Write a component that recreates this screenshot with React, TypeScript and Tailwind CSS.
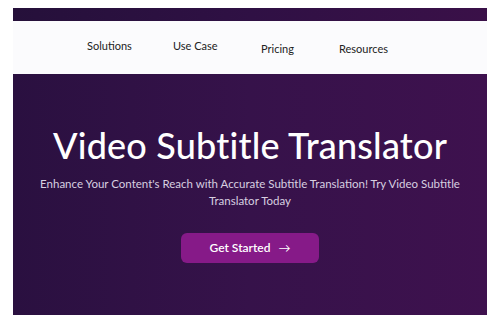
import React from "react";

const navItems = [
  { label: "Solutions", offset: "mt-0", width: "w-[86px]" },
  { label: "Use Case", offset: "mt-0", width: "w-[88px]" },
  { label: "Pricing", offset: "mt-[3px]", width: "w-[78px]" },
  { label: "Resources", offset: "mt-[3px]", width: "" },
];

export default function App() {
  return (
    <div
      className="w-[500px] h-[323px] bg-white pt-2 px-[13px]"
      style={{ fontFamily: "Lato, 'Noto Sans', sans-serif" }}
    >
      {/* top strip */}
      <div className="h-[13px] bg-gradient-to-r from-[#25103a] via-[#2f1044] to-[#3a1048]" />

      {/* Nav */}
      <nav className="h-[53px] bg-[#fbfbfd] flex items-start pt-[17px] pl-[74px]">
        {navItems.map((item) => (
          <span key={item.label} className={`text-[11px] text-[#222] ${item.offset} ${item.width}`}>
            {item.label}
          </span>
        ))}
      </nav>

      {/* Hero */}
      <section className="h-[241px] bg-gradient-to-r from-[#2a1040] via-[#36124a] to-[#3e114e] flex flex-col items-center text-center pt-[49px]">
        <h1 className="text-[36px] leading-[45px] font-medium text-white tracking-[0.2px]">
          Video Subtitle Translator
        </h1>
        <p className="mt-[7px] text-[11.5px] leading-[17px] text-[#d8cfe0] w-[420px]">
          Enhance Your Content's Reach with Accurate Subtitle Translation! Try Video Subtitle
          Translator Today
        </p>
        <button className="mt-[24px] w-[138px] h-[30px] rounded-[6px] bg-[#861a88] text-white text-[12px] font-semibold flex items-center justify-center gap-2">
          Get Started
          <span className="text-[12px] font-normal">→</span>
        </button>
      </section>
    </div>
  );
}
